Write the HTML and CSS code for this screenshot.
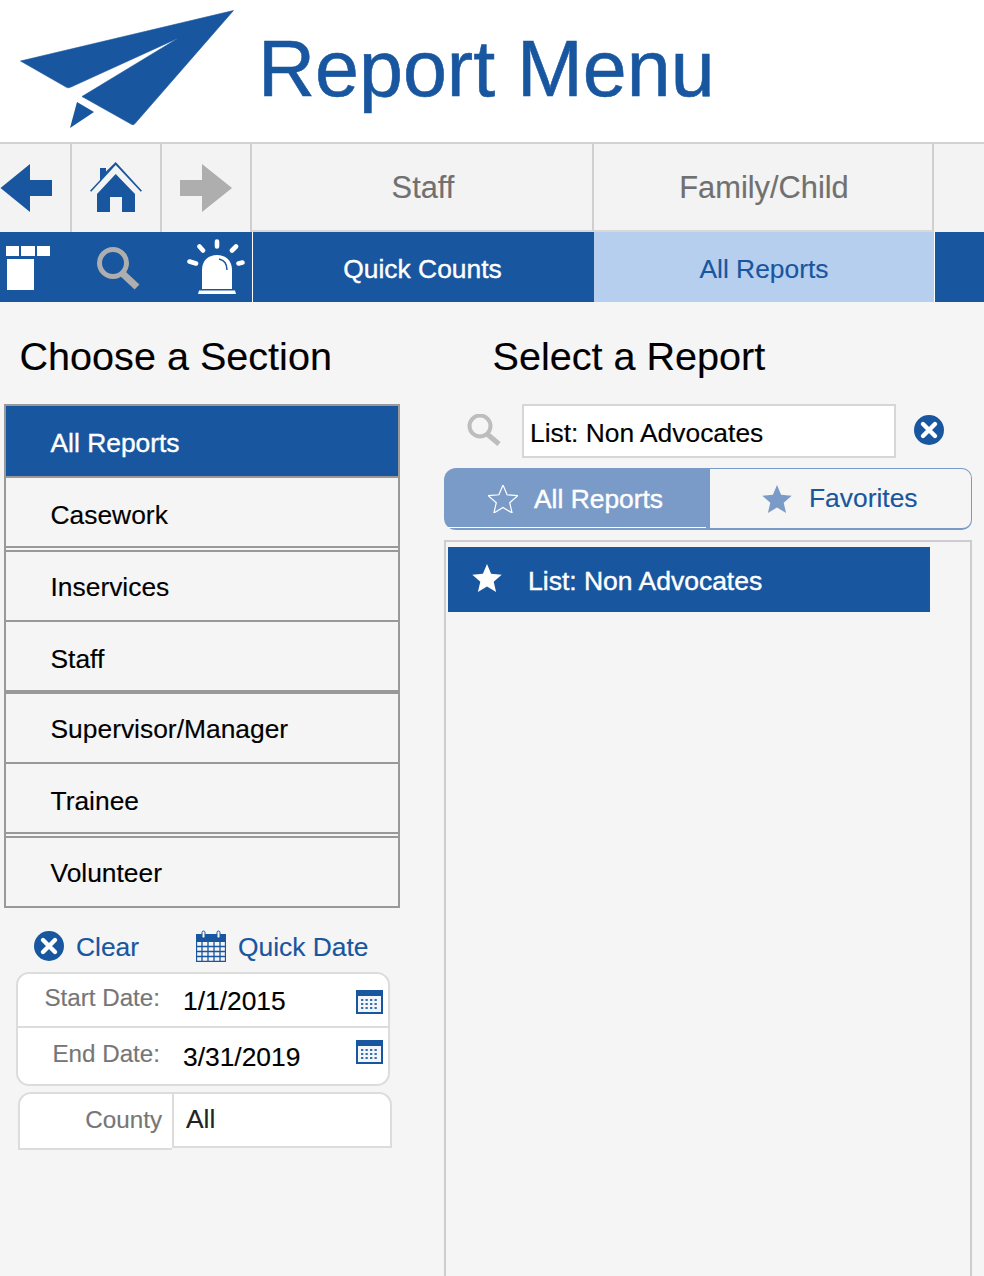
FILE: index.html
```html
<!DOCTYPE html>
<html lang="en">
<head>
<meta charset="utf-8">
<title>Report Menu</title>
<link rel="stylesheet" href="styles.css">
</head>
<body>
<svg class="defs" width="0" height="0" aria-hidden="true">
  <defs>
    <g id="x-circle">
      <circle cx="15" cy="15" r="15" fill="#18569f"/>
      <path d="M9 9 21 21M21 9 9 21" stroke="#fff" stroke-width="4.4" stroke-linecap="round" fill="none"/>
    </g>
    <g id="mini-cal">
      <rect x="0" y="0" width="27" height="24" fill="#18569f"/>
      <rect x="2" y="6" width="23" height="16" fill="#f2f5fa"/>
      <path d="M5 10h17M5 14h17M5 18h17" stroke="#18569f" stroke-opacity=".85" stroke-width="2.200" stroke-dasharray="2.300 2.200" fill="none"/>
    </g>
    <polygon id="star" points="15,0 19.100,9.800 29.700,10.700 21.700,17.700 24.100,28 15,22.500 5.900,28 8.300,17.700 0.300,10.700 10.900,9.800"/>
  </defs>
</svg>

<header class="banner">
  <svg class="logo" viewBox="0 0 240 132" aria-hidden="true">
    <path fill="#18569f" stroke="#18569f" stroke-width="0.600" stroke-linejoin="round" d="M233.500 10.500 20.500 61 66 87C67.500 88 69 88 71 87L178.500 38 82 96.500 131 124C132.500 125 134 125 135 123.500Z"/>
    <path fill="#18569f" d="M77 102 94 112 70 128Z"/>
  </svg>
  <h1 class="banner-title">Report Menu</h1>
</header>

<nav class="nav-row">
  <a class="nav-icon nav-icon-back">
    <svg viewBox="0 144 70 86" aria-hidden="true"><path fill="#18569f" d="M0.500 188 30 164V180H52V196H30V212Z"/></svg>
  </a>
  <a class="nav-icon">
    <svg viewBox="72 144 88 86" aria-hidden="true">
      <path fill="#18569f" d="M100 168H106V171.500L115.700 162 142 190.800 140.800 191.800 115.700 165 91.200 191.800 90 190.800 100 180Z"/>
      <path fill="#18569f" d="M115.700 174 135 194V212H122V197H110V212H97V194Z"/>
    </svg>
  </a>
  <a class="nav-icon">
    <svg viewBox="162 144 88 86" aria-hidden="true"><path fill="#aeaeae" d="M232 188 202 164V180H180V196H202V212Z"/></svg>
  </a>
  <a class="nav-tab nav-tab-first">Staff</a>
  <a class="nav-tab">Family/Child</a>
  <div class="nav-rest"></div>
</nav>

<div class="sub-row">
  <div class="sub-tools">
    <svg viewBox="0 232 252 70" aria-hidden="true">
      <path fill="#fff" d="M6 246H19V256H6ZM21 246H35V256H21ZM37 246H50V256H37ZM7 259H34V290H7Z"/>
      <circle cx="113" cy="263" r="13.500" fill="none" stroke="#aeaeae" stroke-width="5"/>
      <path d="M122 273 137 287" stroke="#aeaeae" stroke-width="7" fill="none"/>
      <path fill="#fff" d="M202 289V270C202 260 209 255 217 255S232 260 232 270V289Z"/>
      <path fill="none" stroke="#18569f" stroke-width="1.500" d="M219 259C224 260 227 264 227 270"/>
      <path fill="#fff" d="M199 290.500H235L236 294H198Z"/>
      <path d="M217 241.500V246.500M199.500 246.500 203 250.500M236 246.500 232 250.500M189.500 261.500 196 263.500M238.500 263.500 242.500 262.500" stroke="#fff" stroke-width="4.600" stroke-linecap="round" fill="none"/>
    </svg>
  </div>
  <a class="sub-tab sub-tab-plain">Quick Counts</a>
  <a class="sub-tab sub-tab-active">All Reports</a>
  <div class="sub-rest"></div>
</div>

<main class="main">
  <section class="col-left">
    <h2 class="col-title col-title-left">Choose a Section</h2>
    <ul class="sections">
      <li class="section section-active">All Reports</li>
      <li class="section section-low section-gap">Casework</li>
      <li class="section section-ruled">Inservices</li>
      <li class="section section-low">Staff</li>
      <li class="section section-ruled">Supervisor/Manager</li>
      <li class="section section-low section-gap">Trainee</li>
      <li class="section section-ruled">Volunteer</li>
    </ul>
    <div class="actions">
      <a class="action action-clear">
        <svg class="action-icon" viewBox="0 0 30 30" aria-hidden="true"><use href="#x-circle"/></svg>
        <span class="action-text">Clear</span>
      </a>
      <a class="action">
        <svg class="action-icon action-cal" viewBox="0 0 30 32" aria-hidden="true">
          <rect x="0" y="4" width="30" height="8" fill="#18569f"/>
          <rect x="6" y="1" width="3" height="7" rx="1.500" fill="#f4f4f4" stroke="#18569f" stroke-width="1"/>
          <rect x="21" y="1" width="3" height="7" rx="1.500" fill="#f4f4f4" stroke="#18569f" stroke-width="1"/>
          <path d="M.5 12V31.500H29.500V12M0 16.500H30M0 21.500H30M0 26.500H30M6 12V32M12 12V32M18 12V32M24 12V32" fill="none" stroke="#18569f" stroke-width="1.300"/>
        </svg>
        <span class="action-text">Quick Date</span>
      </a>
    </div>
    <div class="dates">
      <div class="date-row date-row-first">
        <span class="date-label">Start Date:</span>
        <span class="date-value">1/1/2015</span>
        <svg class="mini-cal mini-cal-low" viewBox="0 0 27 24" aria-hidden="true"><use href="#mini-cal"/></svg>
      </div>
      <div class="date-row date-row-second">
        <span class="date-label">End Date:</span>
        <span class="date-value">3/31/2019</span>
        <svg class="mini-cal mini-cal-high" viewBox="0 0 27 24" aria-hidden="true"><use href="#mini-cal"/></svg>
      </div>
    </div>
    <div class="county">
      <span class="county-label">County</span>
      <span class="county-value">All</span>
    </div>
  </section>

  <section class="col-right">
    <h2 class="col-title col-title-right">Select a Report</h2>
    <div class="search">
      <svg class="search-icon" viewBox="0 0 34 32" aria-hidden="true">
        <circle cx="13" cy="12" r="10.500" fill="none" stroke="#bdbdbd" stroke-width="4"/>
        <path d="M20 20 32 30" stroke="#bdbdbd" stroke-width="5" fill="none"/>
      </svg>
      <div class="search-input">List: Non Advocates</div>
      <svg class="search-clear" viewBox="0 0 30 30" aria-hidden="true"><use href="#x-circle"/></svg>
    </div>
    <div class="tabs">
      <a class="tab tab-on">
        <svg class="tab-star" viewBox="0 0 30 28" aria-hidden="true"><use href="#star" fill="none" stroke="#fff" stroke-width="1.200"/></svg>
        All Reports
      </a>
      <a class="tab tab-off">
        <svg class="tab-star" viewBox="0 0 30 28" aria-hidden="true"><use href="#star" fill="#7a9bc7"/></svg>
        Favorites
      </a>
    </div>
    <div class="reports">
      <div class="report">
        <svg class="report-star" viewBox="0 0 30 28" aria-hidden="true"><use href="#star" fill="#fff"/></svg>
        <span class="report-text">List: Non Advocates</span>
      </div>
    </div>
  </section>
</main>
</body>
</html>
```
FILE: styles.css
```css
* { box-sizing: border-box; }
html, body { margin: 0; padding: 0; }
body {
  width: 984px;
  height: 1276px;
  overflow: hidden;
  background: #f5f5f5;
  font-family: "Liberation Sans", Arial, sans-serif;
  color: #000;
  -webkit-text-stroke: 0.15px currentColor;
}
.defs { display: block; height: 0; }
a { display: block; }

.banner {
  display: flex;
  align-items: center;
  height: 144px;
  background: #fff;
  border-bottom: 2px solid #d2d2d2;
}
.logo { width: 240px; height: 132px; flex: none; align-self: flex-start; }
.banner-title {
  margin: 0 0 0 18px;
  font-size: 79px;
  font-weight: 400;
  line-height: 1;
  color: #18569f;
  position: relative;
  top: -3px;
  -webkit-text-stroke: 0.6px currentColor;
}

.nav-row { display: flex; height: 88px; background: #f3f3f3; }
.nav-icon { flex: none; width: 90px; height: 88px; border-right: 2px solid #cfcfcf; }
.nav-icon-back { width: 72px; }
.nav-icon svg { display: block; width: 100%; height: 86px; }
.nav-tab {
  flex: none;
  width: 342px;
  border-right: 2px solid #cfcfcf;
  border-bottom: 2px solid #d8d8d8;
  display: flex;
  align-items: center;
  justify-content: center;
  font-size: 30.8px;
  color: #707070;
  padding: 2px 0 0 2px;
}
.nav-tab-first { width: 342px; }
.nav-tab + .nav-tab { width: 340px; }
.nav-rest { flex: 1; }

.sub-row { display: flex; height: 70px; background: #18569f; }
.sub-tools { flex: none; width: 253px; border-right: 1px solid #fff; }
.sub-tools svg { display: block; width: 252px; height: 70px; }
.sub-tab {
  flex: none;
  width: 341px;
  display: flex;
  align-items: center;
  justify-content: center;
  font-size: 26.4px;
  color: #fff;
  padding-top: 4px;
}
.sub-tab-plain { padding-right: 2px; -webkit-text-stroke: 0.4px currentColor; }
.sub-tab-active {
  width: 341px;
  background: #b6cfee;
  color: #18569f;
  border-right: 1px solid #fff;
}
.sub-rest { flex: 1; }

.main { display: flex; align-items: flex-start; }
.col-left { flex: none; width: 396px; margin-left: 4px; }
.col-right { flex: none; width: 528px; margin-left: 44px; }
.col-title {
  margin: 0;
  height: 102px;
  padding-top: 31px;
  font-size: 39.6px;
  line-height: 46px;
  font-weight: 400;
}
.col-title-left { padding-left: 15.5px; }
.col-title-right { padding-left: 48.5px; }

.sections {
  list-style: none;
  margin: 0;
  padding: 0;
  border: 2px solid #999;
  border-bottom: 0;
  font-size: 26.4px;
}
.section {
  display: flex;
  align-items: center;
  height: 70px;
  padding-left: 44.5px;
  padding-top: 2px;
  border-bottom: 2px solid #999;
}
.section-active {
  height: 72px;
  background: #18569f;
  color: #fff;
  padding-top: 4px;
  -webkit-text-stroke: 0.4px currentColor;
}
.section-low { padding-top: 6px; }
.section-gap { margin-bottom: 2px; }
.section-ruled { height: 72px; border-top: 2px solid #999; }

.actions {
  display: flex;
  align-items: center;
  margin-top: 22px;
  height: 32px;
  padding-left: 30px;
  font-size: 26.4px;
  color: #18569f;
}
.action { display: flex; align-items: center; gap: 12px; }
.action-clear { width: 162px; }
.action-text { padding-top: 2px; }
.action-icon { display: block; flex: none; width: 30px; height: 30px; }
.action-cal { height: 32px; }

.dates {
  margin: 10px 0 0 12px;
  width: 374px;
  height: 114px;
  background: #fff;
  border: 2px solid #dcdcdc;
  border-radius: 13px;
}
.date-row { display: flex; align-items: center; }
.date-row-first { height: 54px; border-bottom: 2px solid #dcdcdc; }
.date-row-second { height: 56px; }
.date-label {
  width: 142px;
  text-align: right;
  font-size: 24.2px;
  color: #767676;
  padding-bottom: 4px;
}
.date-value {
  flex: 1;
  padding-left: 23px;
  padding-top: 2px;
  font-size: 26.4px;
}
.mini-cal { display: block; flex: none; width: 27px; height: 24px; margin-right: 5px; }
.mini-cal-low { margin-top: 4px; }
.mini-cal-high { margin-bottom: 8px; }

.county {
  display: flex;
  align-items: flex-start;
  margin: 6px 0 0 14px;
  width: 374px;
  height: 58px;
}
.county-label {
  flex: none;
  width: 154px;
  height: 58px;
  background: #fff;
  border: 2px solid #dcdcdc;
  border-right: 0;
  border-top-left-radius: 13px;
  padding-right: 10px;
  text-align: right;
  font-size: 24.2px;
  line-height: 52px;
  color: #767676;
}
.county-value {
  flex: 1;
  height: 56px;
  background: #fff;
  border: 2px solid #dcdcdc;
  border-top-right-radius: 13px;
  padding-left: 12px;
  font-size: 26.4px;
  line-height: 50px;
  color: #222;
}

.search { display: flex; align-items: center; height: 54px; }
.search-icon { display: block; flex: none; width: 34px; height: 32px; margin: 0 21px 2px 23px; }
.search-input {
  flex: none;
  width: 374px;
  height: 54px;
  background: #fff;
  border: 2px solid #d6d6d6;
  padding-left: 6px;
  font-size: 26.4px;
  line-height: 54px;
}
.search-clear { display: block; flex: none; width: 30px; height: 30px; margin: 0 0 2px 18px; }

.tabs { display: flex; height: 62px; margin-top: 10px; font-size: 26.4px; }
.tab { display: flex; align-items: center; height: 62px; }
.tab-star { display: block; flex: none; width: 30px; height: 28px; }
.tab-on {
  position: relative;
  flex: none;
  width: 266px;
  padding-left: 44px;
  gap: 16px;
  background: #7a9bc7;
  color: #fff;
  border-radius: 12px 0 0 12px;
  -webkit-text-stroke: 0.4px currentColor;
}
.tab-on::after {
  content: "";
  position: absolute;
  left: 4px;
  right: 4px;
  bottom: 2px;
  height: 1px;
  background: #fff;
}
.tab-off {
  flex: 1;
  padding-left: 52px;
  gap: 17px;
  color: #18569f;
  border: 1px solid #7a9bc7;
  border-bottom-width: 2px;
  border-left: 0;
  border-radius: 0 10px 10px 0;
}
.reports {
  height: 760px;
  margin-top: 10px;
  padding: 5px 40px 0 2px;
  border: 2px solid #cdcdcd;
}
.report {
  display: flex;
  align-items: center;
  gap: 26px;
  height: 65px;
  padding-left: 24px;
  background: #18569f;
  color: #fff;
  font-size: 26.5px;
  -webkit-text-stroke: 0.4px currentColor;
}
.report-text { padding-top: 4px; }
.report-star { display: block; flex: none; width: 30px; height: 28px; margin-bottom: 3px; }
```
